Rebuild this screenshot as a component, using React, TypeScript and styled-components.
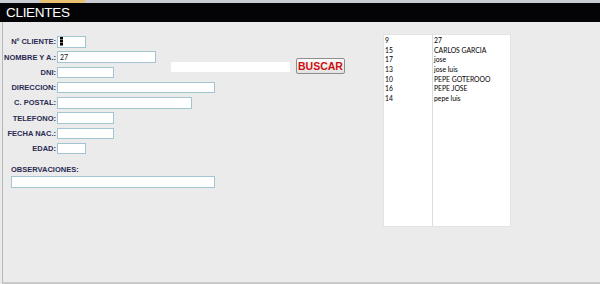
import styled, { createGlobalStyle } from "styled-components";

const Global = createGlobalStyle`
  html, body {
    margin: 0;
    padding: 0;
    background: #ebebeb;
  }
`;

const Page = styled.div`
  display: flex;
  flex-direction: column;
  height: 284px;
  width: 600px;
  overflow: hidden;
  font-family: "Liberation Sans", Arial, sans-serif;
`;

const TopStrip = styled.div`
  height: 3px;
  background: #c9ccd3;
  display: flex;
`;

const Tab = styled.div`
  margin-left: 40px;
  width: 45px;
  background: #e8c271;
`;

const Header = styled.div`
  height: 19px;
  background: #040406;
  color: #fff;
  font-size: 13.5px;
  letter-spacing: -0.3px;
  line-height: 19px;
  padding-left: 6px;
`;

const Body = styled.div`
  flex: 1;
  display: flex;
  border-left: 1px solid #b9b9b9;
  margin-left: 2px;
  border-bottom: 2px solid #c9c9c9;
  background: #ebebeb;
`;

const FormPanel = styled.div`
  width: 380px;
  padding-top: 14px;
`;

const Grid = styled.div`
  display: grid;
  grid-template-columns: 53px auto;
  column-gap: 1px;
  grid-auto-rows: 11.5px;
  row-gap: 3.75px;
  align-items: center;
`;

const Label = styled.label`
  font-size: 7.5px;
  font-weight: bold;
  color: #2a2a52;
  text-align: right;
  white-space: nowrap;
`;

const Field = styled.div`
  display: flex;
  align-items: flex-start;
  height: 11.5px;
`;

const Input = styled.div<{ w: number }>`
  box-sizing: border-box;
  width: ${(p) => p.w}px;
  height: 11.5px;
  background: #fff;
  border: 1px solid #a3c5d2;
  font-family: "Lato", "Liberation Sans", sans-serif;
  font-size: 7px;
  line-height: 9px;
  padding-left: 2px;
  color: #111;
  display: flex;
  align-items: center;
`;

const Caret = styled.span`
  display: block;
  width: 3px;
  height: 9px;
  background: repeating-linear-gradient(
    to bottom,
    #000 0,
    #000 2px,
    #777 2px,
    #777 3px
  );
`;

const SearchBox = styled.div`
  margin-left: 57px;
  margin-top: -5px;
  width: 119px;
  height: 10px;
  background: #fff;
`;

const SearchButton = styled.button`
  margin-left: 6px;
  margin-top: -9px;
  width: 49px;
  height: 16px;
  padding: 0;
  border: 1px solid #8e8e8e;
  border-radius: 2px;
  background: linear-gradient(#fbfbfb, #e2e2e2);
  color: #cc1010;
  font-family: "Liberation Sans", Arial, sans-serif;
  font-weight: bold;
  font-size: 10.5px;
  line-height: 14px;
`;

const NotesLabel = styled(Label)`
  display: block;
  text-align: left;
  margin: 11px 0 0 8px;
`;

const NotesInput = styled(Input)`
  margin: 2px 0 0 8px;
`;

const ListBox = styled.div`
  margin-top: 12px;
  width: 128px;
  height: 193px;
  background: #fff;
  border: 1px solid #e3e3e3;
  box-sizing: border-box;
  display: grid;
  grid-template-columns: 48px 1fr;
  font-family: "Lato", "Liberation Sans", sans-serif;
  font-size: 6.8px;
  color: #000;
`;

const Column = styled.div<{ divider?: boolean }>`
  padding-top: 1px;
  padding-left: 1px;
  border-left: ${(p) => (p.divider ? "1px solid #dcdcdc" : "none")};
`;

const Cell = styled.div`
  height: 9.7px;
  line-height: 9.7px;
  white-space: nowrap;
`;

const rows: [string, string][] = [
  ["9", "27"],
  ["15", "CARLOS GARCIA"],
  ["17", "jose"],
  ["13", "jose luis"],
  ["10", "PEPE GOTEROOO"],
  ["16", "PEPE JOSE"],
  ["14", "pepe luis"],
];

export default function App() {
  return (
    <Page>
      <Global />
      <TopStrip>
        <Tab />
      </TopStrip>
      <Header>CLIENTES</Header>
      <Body>
        <FormPanel>
          <Grid>
            <Label>Nº CLIENTE:</Label>
            <Field>
              <Input w={29}>
                <Caret />
              </Input>
            </Field>
            <Label>NOMBRE Y A.:</Label>
            <Field>
              <Input w={99}>27</Input>
            </Field>
            <Label>DNI:</Label>
            <Field>
              <Input w={57} />
              <SearchBox />
              <SearchButton>BUSCAR</SearchButton>
            </Field>
            <Label>DIRECCION:</Label>
            <Field>
              <Input w={158} />
            </Field>
            <Label>C. POSTAL:</Label>
            <Field>
              <Input w={135} />
            </Field>
            <Label>TELEFONO:</Label>
            <Field>
              <Input w={57} />
            </Field>
            <Label>FECHA NAC.:</Label>
            <Field>
              <Input w={57} />
            </Field>
            <Label>EDAD:</Label>
            <Field>
              <Input w={29} />
            </Field>
          </Grid>
          <NotesLabel>OBSERVACIONES:</NotesLabel>
          <NotesInput w={204} />
        </FormPanel>
        <ListBox>
          <Column>
            {rows.map(([id]) => (
              <Cell key={id}>{id}</Cell>
            ))}
          </Column>
          <Column divider>
            {rows.map(([id, name]) => (
              <Cell key={id}>{name}</Cell>
            ))}
          </Column>
        </ListBox>
      </Body>
    </Page>
  );
}
